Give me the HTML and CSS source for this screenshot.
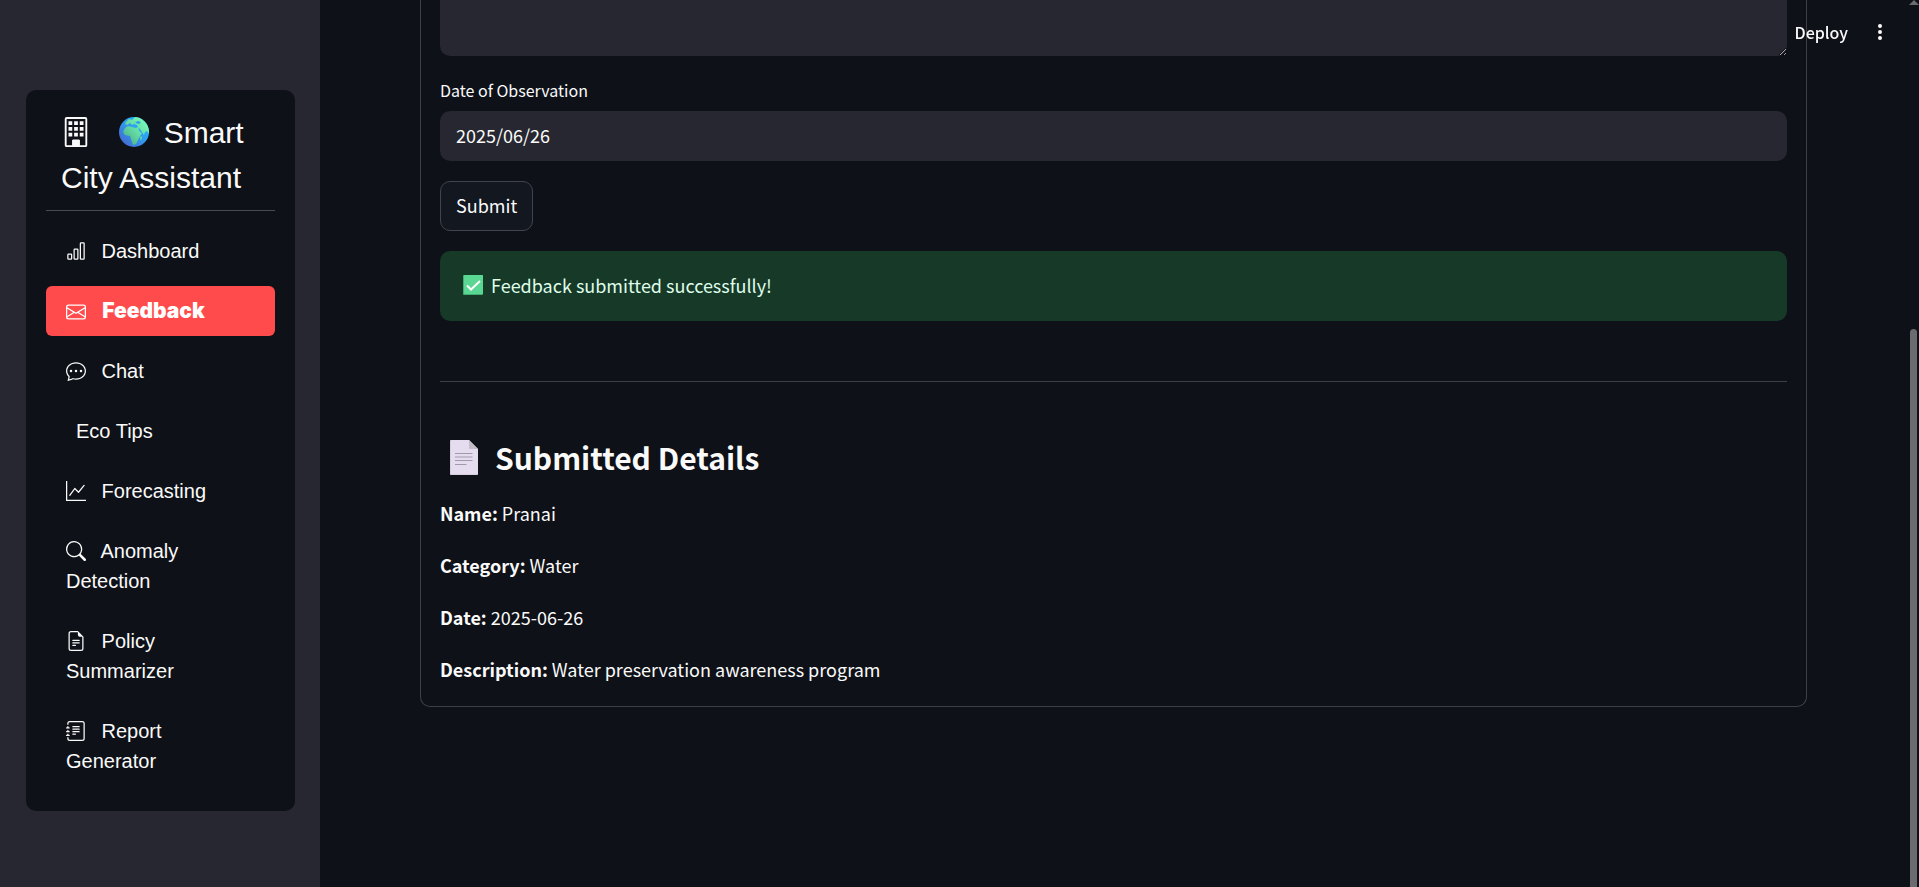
FILE: index.html
```html
<!DOCTYPE html>
<html lang="en">
<head>
<meta charset="utf-8">
<title>Smart City Assistant</title>
<link rel="stylesheet" href="styles.css">
</head>
<body>
<aside class="sidebar">
  <div class="menu-card">
    <h2 class="menu-title">
      <svg class="title-icon" viewBox="0 0 16 16" fill="currentColor" aria-hidden="true"><path fill-rule="evenodd" d="M3 0h10a1 1 0 0 1 1 1v14a1 1 0 0 1-1 1H3a1 1 0 0 1-1-1V1a1 1 0 0 1 1-1zM3 1v14h3v-2.500a.5.5 0 0 1 .5-.5h3a.5.5 0 0 1 .5.5V15h3V1z"/><path d="M4 2.200h2v2H4zm3 0h2v2H7zm3 0h2v2h-2zM4 5.300h2v2H4zm3 0h2v2H7zm3 0h2v2h-2zM4 8.400h2v2H4zm3 0h2v2H7zm3 0h2v2h-2zM6 12.200h4V15H6z"/></svg>
      <svg class="globe" viewBox="0 0 30 30" aria-hidden="true">
        <defs>
          <linearGradient id="sea" x1="1" y1="0" x2="0" y2="1"><stop offset="0" stop-color="#22c4ff"/><stop offset=".5" stop-color="#3199ec"/><stop offset="1" stop-color="#4a5ccb"/></linearGradient>
          <linearGradient id="land" x1="1" y1="0" x2="0" y2="1"><stop offset="0" stop-color="#7dffbd"/><stop offset=".5" stop-color="#66dda6"/><stop offset="1" stop-color="#43a381"/></linearGradient>
          <clipPath id="disc"><circle cx="15" cy="15" r="15"/></clipPath>
        </defs>
        <g clip-path="url(#disc)">
          <path fill="url(#sea)" d="M0 0h30v30H0z"/>
          <path fill="url(#land)" d="M7 5l3-3 3 1 3-3h14v17l-2-3-2 1-1 3-2-3-2-3-2-1 2 4 2 1-2 3-2 4-2 4-3 1-2-6-1-3-5-1-2-3 2-4 3-2 4 1 4 1 2-1-1-2-3-1-2 1-2-2-3 2-2-1z"/>
          <path fill="#3199ec" d="M16 5l4-1 2 2-3 1z"/>
          <path fill="#66dda6" d="M21 21l1-2 1 1-1 4z"/>
        </g>
      </svg>
      Smart City Assistant
    </h2>
    <nav class="menu">
      <a class="item" href="#"><svg class="icon" viewBox="0 0 16 16" fill="currentColor" aria-hidden="true"><path d="M4 11H2v3h2zm5-4H7v7h2zm5-5v12h-2V2zm-2-1a1 1 0 0 0-1 1v12a1 1 0 0 0 1 1h2a1 1 0 0 0 1-1V2a1 1 0 0 0-1-1zM6 7a1 1 0 0 1 1-1h2a1 1 0 0 1 1 1v7a1 1 0 0 1-1 1H7a1 1 0 0 1-1-1zm-5 4a1 1 0 0 1 1-1h2a1 1 0 0 1 1 1v3a1 1 0 0 1-1 1H2a1 1 0 0 1-1-1z"/></svg> Dashboard</a>
      <a class="item active" href="#" aria-current="page"><svg class="icon" viewBox="0 0 16 16" fill="currentColor" aria-hidden="true"><path d="M0 4a2 2 0 0 1 2-2h12a2 2 0 0 1 2 2v8a2 2 0 0 1-2 2H2a2 2 0 0 1-2-2zm2-1a1 1 0 0 0-1 1v.217l7 4.200 7-4.200V4a1 1 0 0 0-1-1zm13 2.383-4.708 2.825L15 11.105zm-.034 6.876-5.640-3.471L8 9.583l-1.326-.795-5.640 3.470A1 1 0 0 0 2 13h12a1 1 0 0 0 .966-.741M1 11.105l4.708-2.897L1 5.383z"/></svg> Feedback</a>
      <a class="item" href="#"><svg class="icon" viewBox="0 0 16 16" fill="currentColor" aria-hidden="true"><path d="M5 8a1 1 0 1 1-2 0 1 1 0 0 1 2 0m4 0a1 1 0 1 1-2 0 1 1 0 0 1 2 0m3 1a1 1 0 1 0 0-2 1 1 0 0 0 0 2"/><path d="m2.165 15.803.02-.004c1.830-.363 2.948-.842 3.468-1.105A9 9 0 0 0 8 15c4.418 0 8-3.134 8-7s-3.582-7-8-7-8 3.134-8 7c0 1.760.743 3.370 1.970 4.600a10.400 10.400 0 0 1-.524 2.318l-.003.011a11 11 0 0 1-.244.637c-.079.186.074.394.273.362a22 22 0 0 0 .693-.125m.8-3.108a1 1 0 0 0-.287-.801C1.618 10.830 1 9.468 1 8c0-3.192 3.004-6 7-6s7 2.808 7 6-3.004 6-7 6a8 8 0 0 1-2.088-.272 1 1 0 0 0-.711.074c-.387.196-1.240.570-2.634.893a11 11 0 0 0 .398-2"/></svg> Chat</a>
      <a class="item" href="#"><span class="icon-gap"></span>Eco Tips</a>
      <a class="item" href="#"><svg class="icon" viewBox="0 0 16 16" fill="currentColor" aria-hidden="true"><path d="M0 0h1v15h15v1H0zm14.817 3.113a.5.5 0 0 1 .07.704l-4.500 5.500a.5.5 0 0 1-.74.037L7.060 6.767l-3.656 5.027a.5.5 0 0 1-.808-.588l4-5.500a.5.5 0 0 1 .758-.06l2.609 2.610 4.150-5.073a.5.5 0 0 1 .704-.07"/></svg> Forecasting</a>
      <a class="item" href="#"><svg class="icon" viewBox="0 0 16 16" fill="currentColor" aria-hidden="true"><path d="M11.742 10.344a6.500 6.500 0 1 0-1.397 1.398h-.001q.044.06.098.115l3.850 3.850a1 1 0 0 0 1.415-1.414l-3.850-3.850a1 1 0 0 0-.115-.1zM12 6.500a5.500 5.500 0 1 1-11 0 5.500 5.500 0 0 1 11 0"/></svg> Anomaly Detection</a>
      <a class="item" href="#"><svg class="icon" viewBox="0 0 16 16" fill="currentColor" aria-hidden="true"><path d="M5.500 7a.5.5 0 0 0 0 1h5a.5.5 0 0 0 0-1zM5 9.500a.5.5 0 0 1 .5-.5h5a.5.5 0 0 1 0 1h-5a.5.5 0 0 1-.5-.5m0 2a.5.5 0 0 1 .5-.5h2a.5.5 0 0 1 0 1h-2a.5.5 0 0 1-.5-.5"/><path d="M9.500 0H4a2 2 0 0 0-2 2v12a2 2 0 0 0 2 2h8a2 2 0 0 0 2-2V4.500zm0 1v2A1.500 1.500 0 0 0 11 4.500h2V14a1 1 0 0 1-1 1H4a1 1 0 0 1-1-1V2a1 1 0 0 1 1-1z"/></svg> Policy Summarizer</a>
      <a class="item" href="#"><svg class="icon" viewBox="0 0 16 16" fill="currentColor" aria-hidden="true"><path d="M5 10.500a.5.5 0 0 1 .5-.5h2a.5.5 0 0 1 0 1h-2a.5.5 0 0 1-.5-.5m0-2a.5.5 0 0 1 .5-.5h5a.5.5 0 0 1 0 1h-5a.5.5 0 0 1-.5-.5m0-2a.5.5 0 0 1 .5-.5h5a.5.5 0 0 1 0 1h-5a.5.5 0 0 1-.5-.5m0-2a.5.5 0 0 1 .5-.5h5a.5.5 0 0 1 0 1h-5a.5.5 0 0 1-.5-.5"/><path d="M3 0h10a2 2 0 0 1 2 2v12a2 2 0 0 1-2 2H3a2 2 0 0 1-2-2v-1h1v1a1 1 0 0 0 1 1h10a1 1 0 0 0 1-1V2a1 1 0 0 0-1-1H3a1 1 0 0 0-1 1v1H1V2a2 2 0 0 1 2-2"/><path d="M1 5v-.5a.5.5 0 0 1 1 0V5h.5a.5.5 0 0 1 0 1h-2a.5.5 0 0 1 0-1zm0 3v-.5a.5.5 0 0 1 1 0V8h.5a.5.5 0 0 1 0 1h-2a.5.5 0 0 1 0-1zm0 3v-.5a.5.5 0 0 1 1 0v.5h.5a.5.5 0 0 1 0 1h-2a.5.5 0 0 1 0-1z"/></svg> Report Generator</a>
    </nav>
  </div>
</aside>
<main class="main">
  <form class="panel">
    <textarea class="field description" aria-label="Description"></textarea>
    <label class="label" for="date">Date of Observation</label>
    <input class="field date" id="date" type="text" value="2025/06/26">
    <button class="submit" type="button">Submit</button>
    <div class="alert" role="alert">
      <svg class="check" viewBox="0 0 20 20" aria-hidden="true"><rect width="20" height="20" rx="1" fill="#3fae73"/><rect x="1" width="19" height="19" rx="1" fill="#5ad792"/><path d="M4 10.500l4 4 9-8.500" fill="none" stroke="#fff" stroke-width="2"/></svg>
      <span>Feedback submitted successfully!</span>
    </div>
    <hr class="rule">
    <h3 class="heading">
      <svg class="page-icon" viewBox="0 0 28 35" aria-hidden="true"><path d="M0 1a1 1 0 0 1 1-1h18l9 9v25a1 1 0 0 1-1 1H1a1 1 0 0 1-1-1z" fill="#e5dcef"/><path d="M19 0v8a1 1 0 0 0 1 1h8z" fill="#c3bcc8"/><path d="M5 13.500h17.500M5 17h17.500M5 20.500h17.500M5 24.500h11.500" stroke="#a29aa8"/><path d="M.5.500v34h27" fill="none" stroke="#cdc3d4" stroke-width=".6"/></svg>
      <span>Submitted Details</span>
    </h3>
    <div class="details">
      <p><strong>Name:</strong> Pranai</p>
      <p><strong>Category:</strong> Water</p>
      <p><strong>Date:</strong> 2025-06-26</p>
      <p><strong>Description:</strong> Water preservation awareness program</p>
    </div>
  </form>
</main>
<header class="toolbar">
  <button class="deploy" type="button">Deploy</button>
  <button class="more" type="button" aria-label="Main menu"><svg viewBox="0 0 6 18" aria-hidden="true"><g fill="#fafafa"><circle cx="3" cy="3" r="2"/><circle cx="3" cy="9" r="2"/><circle cx="3" cy="15" r="2"/></g></svg></button>
</header>
<div class="scrollbar" aria-hidden="true"><span class="arrow"></span><span class="thumb"></span></div>
</body>
</html>
```

FILE: styles.css
```css
* { box-sizing: border-box; }

body {
  margin: 0;
  min-height: 100vh;
  display: flex;
  background: #0e1117;
  color: #fafafa;
  font: 18px/32px "Noto Sans CJK SC", "Noto Sans", sans-serif;
}

.sidebar {
  flex: 0 0 320px;
  padding: 90px 25px 76px 26px;
  background: #262730;
  font-family: "Liberation Sans", Arial, sans-serif;
}

.menu-card {
  padding: 20px;
  border-radius: 10px;
  background: #0e1117;
}

.menu-title {
  margin: 0 0 10px;
  padding: 0 15px 10px;
  border-bottom: 1px solid #4a4b4d;
  font-size: 30px;
  font-weight: 400;
  line-height: 45px;
}

.title-icon, .globe {
  width: 30px;
  height: 30px;
  vertical-align: -4px;
}

.title-icon { margin-right: 12px; }
.globe { margin: 0 6px 0 8px; }

.menu { display: flex; flex-direction: column; }

.item {
  margin: 5px 0;
  padding: 10px 20px;
  border-radius: 6px;
  color: #fafafa;
  font-size: 20px;
  line-height: 30px;
  text-decoration: none;
}

.icon {
  width: 20px;
  height: 20px;
  margin-right: 10px;
  vertical-align: -3px;
}

.icon-gap { margin-right: 10px; }

.active {
  background: #ff4b4b;
  color: #fff;
  font-family: Inter, "Liberation Sans", sans-serif;
  font-size: 21px;
  font-weight: 900;
}

.active .icon { margin-right: 12px; vertical-align: -4px; }

.main { flex: 1; padding: 0 112px 100px 100px; }

.panel {
  display: flex;
  flex-direction: column;
  padding: 0 19px 21px;
  border: 1px solid #3e4044;
  border-top: 0;
  border-radius: 0 0 10px 10px;
}

.field {
  width: 100%;
  border: 0;
  border-radius: 10px;
  background: #262730;
  color: #fafafa;
  font: inherit;
}

.description {
  height: 56px;
  border-radius: 0 0 10px 10px;
  resize: vertical;
}

.label {
  margin: 22px 0 9px;
  font-size: 16px;
  line-height: 24px;
}

.date { height: 50px; padding: 0 16px 2px; }

.submit {
  align-self: flex-start;
  height: 50px;
  margin: 20px 0;
  padding: 0 15px 2px;
  border: 1px solid #41444c;
  border-radius: 10px;
  background: #131720;
  color: #fafafa;
  font: inherit;
}

.alert {
  display: flex;
  align-items: center;
  gap: 8px;
  min-height: 70px;
  padding: 18px 23px 20px;
  border-radius: 10px;
  background: #173928;
  color: #dffde9;
}

.check { width: 20px; height: 20px; }

.rule {
  width: 100%;
  margin: 60px 0 48px;
  border: 0;
  border-top: 1px solid #3e4044;
}

.heading {
  display: flex;
  align-items: center;
  gap: 17px;
  margin: 0 0 13px;
  padding-left: 10px;
  font-size: 30px;
  font-weight: 700;
  line-height: 54px;
}

.page-icon { width: 28px; height: 35px; }

.details { display: flex; flex-direction: column; gap: 20px; }
.details p { margin: 0; }

.toolbar {
  position: fixed;
  top: 0;
  right: 0;
  display: flex;
  align-items: center;
  gap: 29px;
  height: 64px;
  padding-right: 36px;
}

.toolbar button {
  padding: 0;
  border: 0;
  background: none;
  color: #fafafa;
  font: inherit;
  font-size: 16px;
}

.toolbar .deploy { font-weight: 500; }
.more svg { display: block; width: 6px; height: 20px; }

.scrollbar {
  position: fixed;
  top: 0;
  right: 0;
  bottom: 0;
  width: 12px;
}

.arrow {
  position: absolute;
  top: 0;
  left: 2px;
  border: 5px solid transparent;
  border-top: 0;
  border-bottom-color: #6b6c70;
}

.thumb {
  position: absolute;
  top: 329px;
  bottom: 0;
  left: 3px;
  width: 7px;
  border-radius: 4px 4px 0 0;
  background: #6b6c70;
}
```
